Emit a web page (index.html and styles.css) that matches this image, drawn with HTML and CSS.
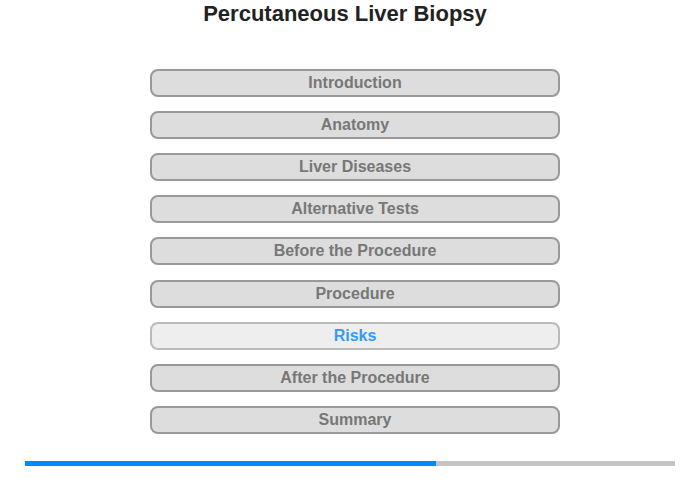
FILE: index.html
```html
<!DOCTYPE html>
<html>
<head>
<meta charset="utf-8">
<link rel="stylesheet" href="styles.css">
</head>
<body>
<div class="page">
  <h1 class="title">Percutaneous Liver Biopsy</h1>
  <nav class="menu">
    <div class="item">Introduction</div>
    <div class="item">Anatomy</div>
    <div class="item">Liver Diseases</div>
    <div class="item">Alternative Tests</div>
    <div class="item">Before the Procedure</div>
    <div class="item">Procedure</div>
    <div class="item active">Risks</div>
    <div class="item">After the Procedure</div>
    <div class="item">Summary</div>
  </nav>
  <div class="progress"><div class="fill" style="width:411px"></div></div>
</div>
</body>
</html>
```
FILE: styles.css
```css
html, body {
  margin: 0;
  padding: 0;
  background: #fff;
}
.page {
  width: 700px;
  height: 480px;
  font-family: "Liberation Sans", Arial, sans-serif;
  display: flex;
  flex-direction: column;
  align-items: center;
}
.title {
  margin: 0 10px 0 0;
  padding-top: 1px;
  font-size: 22px;
  line-height: 26px;
  font-weight: bold;
  color: #222;
}
.menu {
  margin: 42px 0 0 10px;
  display: flex;
  flex-direction: column;
  gap: 14.11px;
}
.item {
  box-sizing: border-box;
  width: 410px;
  height: 28px;
  border: 2px solid #999;
  border-radius: 8px;
  background: #ddd;
  color: #777;
  font-size: 16px;
  font-weight: bold;
  line-height: 24px;
  text-align: center;
}
.item.active {
  background: #eee;
  border-color: #bbb;
  color: #3399ff;
}
.progress {
  margin-top: 27px;
  width: 650px;
  height: 5px;
  background: #c4c4c4;
}
.fill {
  height: 100%;
  background: #0088ff;
}
```
